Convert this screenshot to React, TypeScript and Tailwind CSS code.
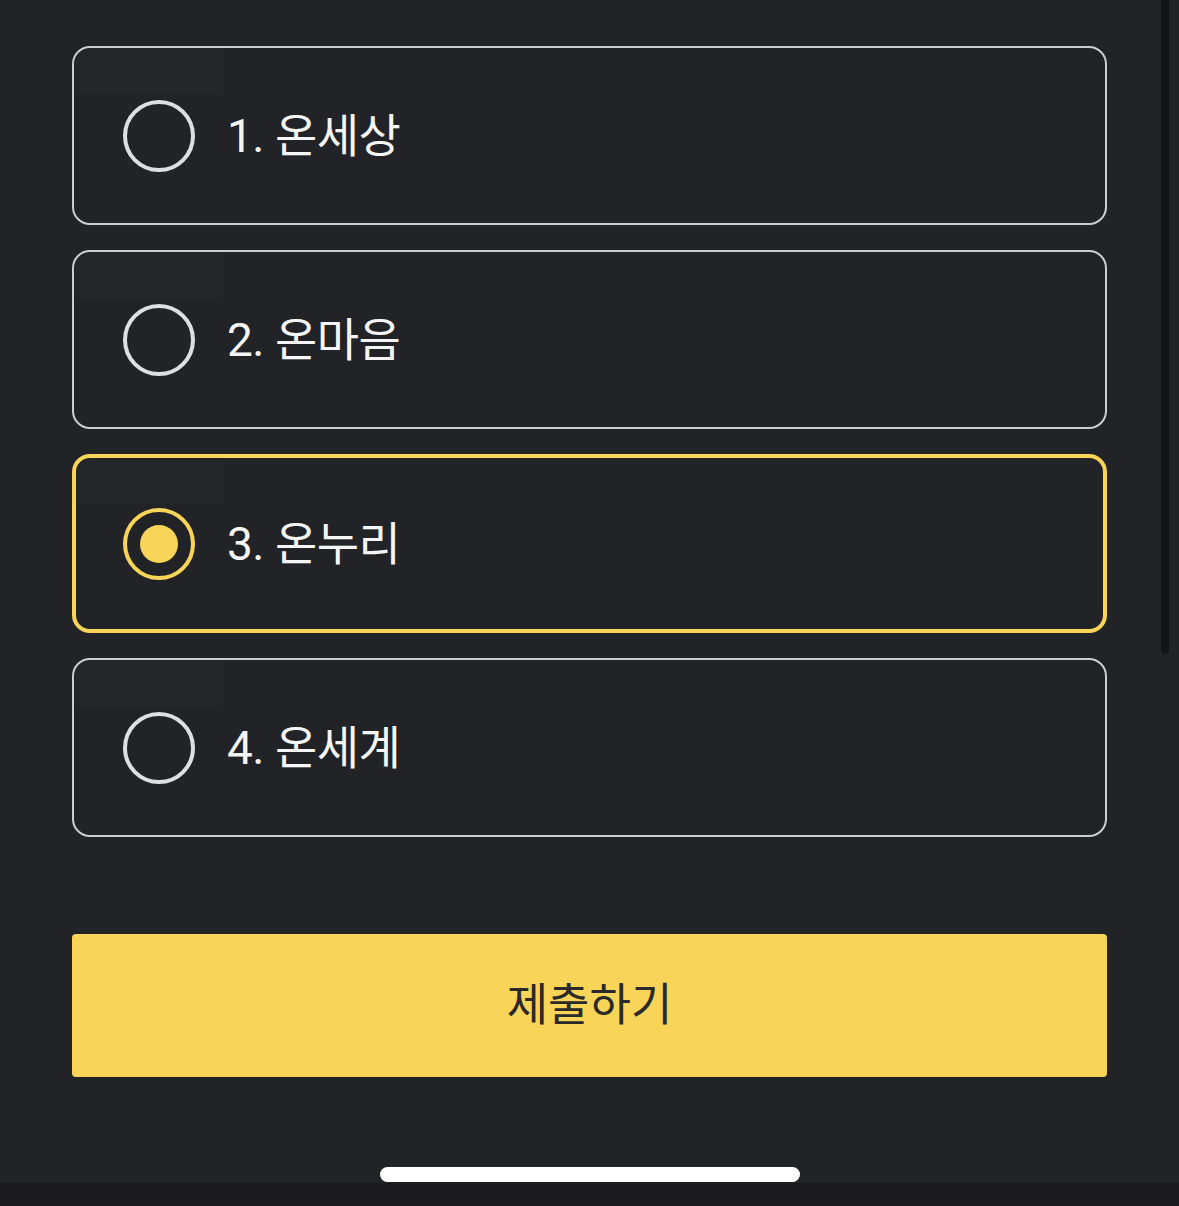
import { useState } from 'react';

const OPTIONS = ['1. 온세상', '2. 온마음', '3. 온누리', '4. 온세계'];

const Radio = ({ checked }: { checked: boolean }) => (
  <div
    className={
      'w-[72px] h-[72px] rounded-full border-[4px] flex items-center justify-center shrink-0 ' +
      (checked ? 'border-[#f8d458]' : 'border-[#dfdfe1]')
    }
  >
    {checked && <div className="w-[38px] h-[38px] rounded-full bg-[#f8d458]" />}
  </div>
);

export default function App() {
  const [selected, setSelected] = useState(2);

  return (
    <div
      className="relative w-[1179px] h-[1206px] bg-[#222326] overflow-hidden"
      style={{ fontFamily: "Roboto, 'Noto Sans CJK KR', sans-serif" }}
    >
      <div className="absolute right-[10px] top-0 w-[8px] h-[654px] rounded-b-full bg-[#131416]" />

      <div className="flex flex-col pt-[46px] pl-[72px] pr-[72px]">
        <div className="flex flex-col gap-[25px]">
          {OPTIONS.map((label, i) => {
            const checked = selected === i;
            return (
              <button
                key={label}
                onClick={() => setSelected(i)}
                className={
                  'relative h-[179px] rounded-[18px] flex items-center text-left ' +
                  (checked ? 'border-[4px] border-[#f8d458] pl-[47px]' : 'border-2 border-[#cdcdcf] pl-[49px]')
                }
              >
                <div className="absolute left-[1px] top-[1px] w-[148px] h-[45px] bg-[#252629] rounded-tl-[16px]" />
                <div className="relative flex items-center gap-[32px]">
                  <Radio checked={checked} />
                  <span className="text-[46px] leading-none text-[#f5f5f5] tracking-[-0.5px]">{label}</span>
                </div>
              </button>
            );
          })}
        </div>

        <button className="mt-[97px] h-[143px] rounded-[4px] bg-[#f8d458] flex items-center justify-center text-[45px] text-[#2a2a2a]">
          제출하기
        </button>
      </div>

      <div className="absolute left-[380px] top-[1167px] w-[420px] h-[15px] rounded-full bg-white" />
      <div className="absolute left-0 right-0 bottom-0 h-[23px] bg-[#1b1b1d]" />
    </div>
  );
}
